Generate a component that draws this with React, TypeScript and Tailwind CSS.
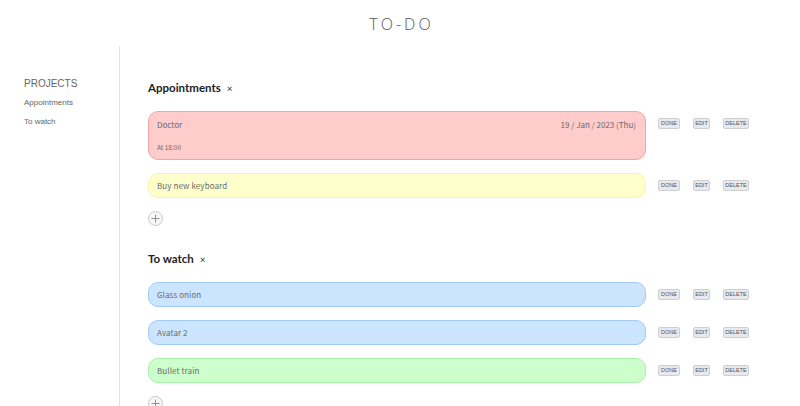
import React from "react";

type Task = {
  title: string;
  date?: string;
  time?: string;
  color: string;
};

const projects: { name: string; tasks: Task[] }[] = [
  {
    name: "Appointments",
    tasks: [
      { title: "Doctor", date: "19 / Jan / 2023 (Thu)", time: "At 18:00", color: "bg-[#ffcccc] border-[#f3a3a3]" },
      { title: "Buy new keyboard", color: "bg-[#ffffcc] border-[#fbf3a6]" },
    ],
  },
  {
    name: "To watch",
    tasks: [
      { title: "Glass onion", color: "bg-[#cce5ff] border-[#a3c9f3]" },
      { title: "Avatar 2", color: "bg-[#cce5ff] border-[#a3c9f3]" },
      { title: "Bullet train", color: "bg-[#ccffcc] border-[#a8f1a8]" },
    ],
  },
];

const cardFont = { fontFamily: "'Noto Sans CJK JP', 'Noto Sans', sans-serif" };

function Btn({ label, w }: { label: string; w: string }) {
  return (
    <button
      className={`${w} h-[11px] flex items-center justify-center rounded-[2px] border border-[#cfcfcf] bg-[#e9e9ed] text-[5.5px] leading-none text-[#555]`}
      style={{ fontFamily: "'Liberation Sans', sans-serif" }}
    >
      {label}
    </button>
  );
}

function TaskRow({ t }: { t: Task }) {
  return (
    <div className="flex items-start">
      <div className={`w-[498px] rounded-[10px] border ${t.color} px-[8px] text-[#6a6a6a]`} style={cardFont}>
        {t.time ? (
          <div className="h-[47px] flex flex-col justify-between py-[7px]">
            <div className="flex justify-between items-center text-[8px] leading-[11px]">
              <span>{t.title}</span>
              <span className="text-[8px] mr-[1px]">{t.date}</span>
            </div>
            <div className="text-[6.5px] leading-[10px]">{t.time}</div>
          </div>
        ) : (
          <div className="h-[23px] flex items-center text-[8px] tracking-[0.1px]">{t.title}</div>
        )}
      </div>
      <div className="flex items-center gap-[13px] ml-[12px] mt-[7px]">
        <Btn label="DONE" w="w-[22px]" />
        <Btn label="EDIT" w="w-[17px]" />
        <Btn label="DELETE" w="w-[26px]" />
      </div>
    </div>
  );
}

function Plus() {
  return (
    <div className="w-[15px] h-[15px] rounded-full border border-[#c9c9c9] bg-[#f6f6f6] flex items-center justify-center">
      <svg width="9" height="9" viewBox="0 0 9 9">
        <path d="M4.5 0.5v8M0.5 4.5h8" stroke="#888" strokeWidth="0.9" />
      </svg>
    </div>
  );
}

export default function App() {
  return (
    <div
      className="w-[800px] h-[406px] overflow-hidden bg-white text-[#444]"
      style={{ fontFamily: "'Liberation Sans', sans-serif" }}
    >
      <header className="h-[46px] flex items-center justify-center">
        <h1
          className="text-[16px] tracking-[3px] text-[#555] font-light pl-[3px] mt-[1px]"
          style={{ fontFamily: "'Open Sans', sans-serif" }}
        >
          TO-DO
        </h1>
      </header>
      <div className="flex h-[360px]">
        <aside className="w-[120px] shrink-0 border-r border-[#e2e2e2] pl-[24px] pt-[31px]">
          <div className="text-[10px] text-[#666] leading-[13px]">PROJECTS</div>
          <div className="text-[8px] text-[#666] mt-[7px] leading-[12px]">Appointments</div>
          <div className="text-[8px] text-[#666] mt-[7px] leading-[12px]">To watch</div>
        </aside>
        <main className="flex-1 pl-[28px] pt-[34px]">
          {projects.map((p, i) => (
            <section key={p.name} className={i > 0 ? "mt-[25px]" : ""}>
              <h2
                className="flex items-center text-[11.5px] font-bold text-[#222] h-[16px]"
                style={{ fontFamily: "Lato, sans-serif" }}
              >
                {p.name}
                <span className="ml-[6px] text-[10px] font-normal text-[#333]">×</span>
              </h2>
              <div className="flex flex-col gap-[13px] mt-[15px]">
                {p.tasks.map((t) => (
                  <TaskRow key={t.title} t={t} />
                ))}
              </div>
              <div className="mt-[13px]">
                <Plus />
              </div>
            </section>
          ))}
        </main>
      </div>
    </div>
  );
}
